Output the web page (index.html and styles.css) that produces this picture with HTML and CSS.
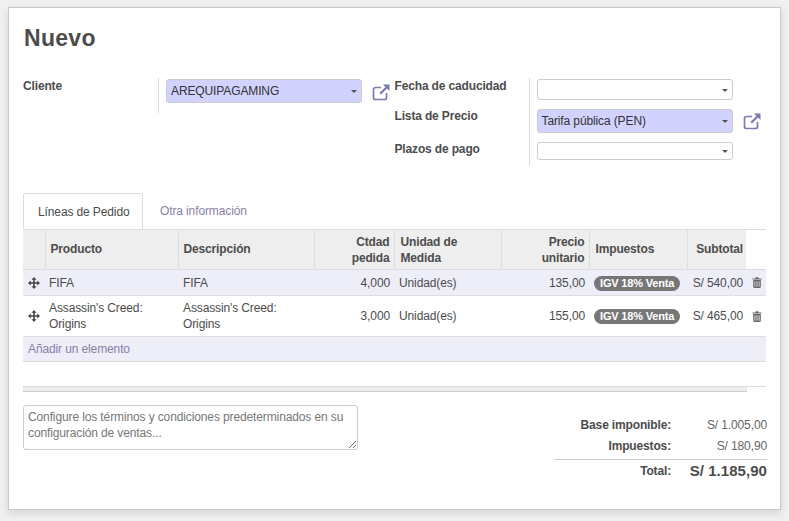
FILE: index.html
```html
<!DOCTYPE html>
<html lang="es">
<head>
    <meta charset="UTF-8">
    <title>Nuevo</title>
    <link rel="stylesheet" href="styles.css">
</head>
<body>
    <svg class="icon-defs" width="0" height="0">
        <symbol id="icon-link" viewBox="0 0 18 18">
            <path d="M14.5 10v4.500a2 2 0 0 1-2 2h-9a2 2 0 0 1-2-2v-8a2 2 0 0 1 2-2H9" fill="none" stroke="currentColor" stroke-width="1.7"/>
            <path d="M11 1.500h6.500V8L15 5.600 9 11.600 7.400 10 13.400 4z" fill="currentColor"/>
        </symbol>
        <symbol id="icon-move" viewBox="0 0 12 12">
            <path d="M5.200 2.800h1.600v2.400h2.400V3.500L12 6 9.200 8.500V6.800H6.800v2.400h1.700L6 12 3.500 9.200h1.700V6.800H2.800v1.700L0 6l2.800-2.500v1.700h2.400V2.800H3.500L6 0l2.500 2.800z" fill="currentColor"/>
        </symbol>
        <symbol id="icon-trash" viewBox="0 0 10 11">
            <path d="M3.300 1.500 3.800.3h2.400l.5 1.200H9.500v1H.5v-1zM1.200 3h7.600v6.800c0 .7-.4 1.200-1 1.200H2.200c-.6 0-1-.5-1-1.200zm1.300 1.200v5.600h.8V4.200zm2.100 0v5.600h.8V4.200zm2.100 0v5.600h.8V4.200z" fill="currentColor" fill-rule="evenodd"/>
        </symbol>
    </svg>

    <div class="sheet">
        <h1 class="title">Nuevo</h1>

        <div class="form-groups">
            <div class="group group-left">
                <div class="label-col">
                    <label class="label">Cliente</label>
                </div>
                <div class="field-col">
                    <div class="field-row">
                        <div class="select select-required select-client">AREQUIPAGAMING<span class="caret"></span></div>
                        <svg class="link-icon"><use href="#icon-link"/></svg>
                    </div>
                </div>
            </div>
            <div class="group group-right">
                <div class="label-col label-col-right">
                    <label class="label label-date">Fecha de caducidad</label>
                    <label class="label label-price">Lista de Precio</label>
                    <label class="label label-terms">Plazos de pago</label>
                </div>
                <div class="field-col">
                    <div class="field-row row-date">
                        <div class="select select-date"><span class="caret"></span></div>
                    </div>
                    <div class="field-row row-price">
                        <div class="select select-required select-price">Tarifa pública (PEN)<span class="caret"></span></div>
                        <svg class="link-icon"><use href="#icon-link"/></svg>
                    </div>
                    <div class="field-row row-terms">
                        <div class="select select-terms"><span class="caret"></span></div>
                    </div>
                </div>
            </div>
        </div>

        <ul class="tabs">
            <li class="tab tab-active">Líneas de Pedido</li>
            <li class="tab">Otra información</li>
        </ul>

        <table class="lines">
            <colgroup>
                <col class="col-handle"><col class="col-product"><col class="col-desc"><col class="col-qty">
                <col class="col-uom"><col class="col-price"><col class="col-tax"><col class="col-subtotal"><col class="col-trash">
            </colgroup>
            <thead>
                <tr>
                    <th></th>
                    <th class="single">Producto</th>
                    <th class="single">Descripción</th>
                    <th class="num">Ctdad pedida</th>
                    <th class="wide">Unidad de Medida</th>
                    <th class="num">Precio unitario</th>
                    <th class="wide single">Impuestos</th>
                    <th class="num amount single">Subtotal</th>
                    <th class="th-empty"></th>
                </tr>
            </thead>
            <tbody>
                <tr class="row-tint row-one">
                    <td class="handle"><svg class="move-icon"><use href="#icon-move"/></svg></td>
                    <td>FIFA</td>
                    <td>FIFA</td>
                    <td class="num">4,000</td>
                    <td>Unidad(es)</td>
                    <td class="num">135,00</td>
                    <td class="tax"><span class="badge">IGV 18% Venta</span></td>
                    <td class="num amount">S/ 540,00</td>
                    <td class="trash"><svg class="trash-icon"><use href="#icon-trash"/></svg></td>
                </tr>
                <tr class="row-two">
                    <td class="handle"><svg class="move-icon"><use href="#icon-move"/></svg></td>
                    <td>Assassin's Creed: Origins</td>
                    <td>Assassin's Creed: Origins</td>
                    <td class="num">3,000</td>
                    <td>Unidad(es)</td>
                    <td class="num">155,00</td>
                    <td class="tax"><span class="badge">IGV 18% Venta</span></td>
                    <td class="num amount">S/ 465,00</td>
                    <td class="trash"><svg class="trash-icon"><use href="#icon-trash"/></svg></td>
                </tr>
                <tr class="row-tint row-add">
                    <td colspan="9"><a class="add-line">Añadir un elemento</a></td>
                </tr>
            </tbody>
        </table>

        <div class="scroll-track"><div class="scroll-bar"></div></div>

        <div class="footer-row">
            <textarea class="notes" placeholder="Configure los términos y condiciones predeterminados en su configuración de ventas..."></textarea>
            <div class="totals">
                <div class="total-row"><span class="total-label">Base imponible:</span><span class="total-value">S/ 1.005,00</span></div>
                <div class="total-row"><span class="total-label">Impuestos:</span><span class="total-value">S/ 180,90</span></div>
                <div class="total-row total-final"><span class="total-label">Total:</span><span class="total-value">S/ 1.185,90</span></div>
            </div>
        </div>

        <div class="bottom-line"></div>
    </div>
</body>
</html>
```

FILE: styles.css
```css
body {
    margin: 0;
    height: 521px;
    overflow: hidden;
    background-color: #f0f0f0;
    color: #4c4c4c;
    font-family: "Liberation Sans", Arial, sans-serif;
    font-size: 12px;
    line-height: 16px;
    letter-spacing: -0.12px;
}
.icon-defs {
    position: absolute;
}
.sheet {
    box-sizing: border-box;
    width: 773px;
    height: 503px;
    margin: 7px 0 0 8px;
    padding: 0 14px;
    background-color: #fff;
    border: 1px solid #c8c8d0;
    box-shadow: 0 3px 8px rgba(0, 0, 0, 0.12);
}
.title {
    margin: 0;
    padding: 14px 0 0 1px;
    font-size: 23px;
    line-height: 32px;
    letter-spacing: 0.3px;
    font-weight: bold;
    color: #4c4c4c;
}

/* form header */
.form-groups {
    display: flex;
    margin-top: 24px;
    height: 88px;
}
.group {
    display: flex;
}
.group-left {
    width: 372px;
}
.group-right {
    width: 372px;
}
.label-col {
    box-sizing: border-box;
    width: 136px;
    border-right: 1px solid #d9d9d9;
    height: 35px;
}
.label-col-right {
    width: 135px;
    height: 88px;
}
.label {
    display: block;
    font-weight: bold;
    letter-spacing: -0.15px;
    color: #4c4c4c;
}
.label-price {
    margin-top: 14px;
}
.label-terms {
    margin-top: 17px;
}
.field-col {
    padding-left: 7px;
    padding-top: 1px;
}
.field-row {
    display: flex;
    align-items: center;
}
.row-date {
    margin-bottom: 9px;
}
.row-price {
    margin-bottom: 9px;
}
.select {
    box-sizing: border-box;
    position: relative;
    width: 196px;
    height: 21px;
    padding: 0 4px;
    line-height: 21px;
    background-color: #fff;
    border: 1px solid #ccc;
    border-radius: 3px;
    color: #333;
}
.select-required {
    height: 24px;
    line-height: 22px;
    background-color: #d2d2ff;
}
.select-terms {
    height: 18px;
}
.caret {
    position: absolute;
    right: 4px;
    top: 50%;
    margin-top: -1px;
    border-top: 3px solid #555;
    border-left: 3px solid transparent;
    border-right: 3px solid transparent;
}
.link-icon {
    width: 18px;
    height: 18px;
    margin-left: 10px;
    color: #7c7bad;
}
.group-left .link-icon {
    margin-top: 1px;
}

/* tabs */
.tabs {
    display: flex;
    list-style: none;
    margin: 27px 0 0;
    padding: 0;
    height: 36px;
}
.tab {
    padding: 10px 14px 10px 17px;
    line-height: 16px;
    color: #8b7fa8;
    white-space: nowrap;
}
.tab-active {
    box-sizing: border-box;
    width: 120px;
    height: 36px;
    padding-left: 14px;
    background-color: #fff;
    border: 1px solid #ddd;
    border-bottom: none;
    border-radius: 3px 3px 0 0;
    color: #4c4c4c;
}

/* order lines */
.lines {
    width: 743px;
    table-layout: fixed;
    border-collapse: collapse;
    color: #4c4c4c;
}
.col-handle { width: 22px; }
.col-product { width: 133px; }
.col-desc { width: 136px; }
.col-qty { width: 80px; }
.col-uom { width: 107px; }
.col-price { width: 88px; }
.col-tax { width: 98px; }
.col-subtotal { width: 59px; }
.col-trash { width: 20px; }
.lines thead tr {
    height: 40px;
}
.lines th {
    padding: 0 4px 0 5px;
    background-color: #eee;
    border-top: 1px solid #ddd;
    border-left: 1px solid #ddd;
    border-bottom: 1px solid #ddd;
    text-align: left;
    font-weight: bold;
    letter-spacing: -0.15px;
}
.lines th.wide {
    padding-left: 6px;
}
.lines th:first-child {
    border-left: none;
}
.lines th.th-empty {
    background-color: #fff;
    border-left: none;
}
.lines th.num,
.lines td.num {
    text-align: right;
}
.lines td {
    padding: 0 4px 0 5px;
    border-bottom: 1px solid #ddd;
}
.lines th.amount,
.lines td.amount {
    padding-left: 0;
    padding-right: 3px;
    white-space: nowrap;
}
.lines th.single {
    padding-bottom: 2px;
}
.row-tint {
    background-color: #eeeef8;
}
.row-one {
    height: 26px;
}
.row-two {
    height: 41px;
}
.row-add {
    height: 25px;
}
.lines td.handle {
    padding: 0 0 0 5px;
    line-height: 0;
}
.lines td.handle + td {
    padding-left: 4px;
}
.lines td.trash {
    padding: 0 0 0 6px;
    line-height: 0;
}
.move-icon {
    width: 12px;
    height: 12px;
    color: #444;
}
.trash-icon {
    width: 10px;
    height: 11px;
    color: #666;
}
.badge {
    display: inline-block;
    padding: 0 6px;
    height: 15px;
    line-height: 15px;
    background-color: #777;
    border-radius: 8px;
    color: #fff;
    font-size: 11px;
    font-weight: bold;
    letter-spacing: -0.17px;
    white-space: nowrap;
}
.add-line {
    color: #8b7fa8;
}

/* scroll bar under the table */
.scroll-track {
    width: 743px;
    margin-top: 24px;
    border-top: 1px solid #ddd;
}
.scroll-bar {
    box-sizing: border-box;
    width: 724px;
    height: 5px;
    background-color: #ececec;
    border-bottom: 1px solid #ccc;
}

/* notes and totals */
.footer-row {
    display: flex;
    justify-content: space-between;
    margin-top: 13px;
}
.notes {
    box-sizing: border-box;
    display: block;
    width: 335px;
    height: 45px;
    margin: 0;
    padding: 3px 4px;
    border: 1px solid #ccc;
    border-radius: 3px;
    font-family: inherit;
    font-size: 12px;
    line-height: 16px;
    letter-spacing: -0.12px;
    color: #333;
}
.notes::placeholder {
    color: #777;
    opacity: 1;
}
.totals {
    width: 213px;
    margin-top: 12px;
    margin-right: -1px;
}
.total-row {
    display: flex;
    height: 21px;
    line-height: 16px;
}
.total-label {
    width: 117px;
    text-align: right;
    font-weight: bold;
    letter-spacing: -0.15px;
}
.total-value {
    flex: 1;
    text-align: right;
    color: #666;
}
.total-final {
    height: 24px;
    padding-top: 1px;
    border-top: 1px solid #ccc;
    line-height: 20px;
}
.total-final .total-value {
    font-size: 15px;
    font-weight: bold;
    letter-spacing: 0.05px;
    color: #4c4c4c;
}
.bottom-line {
    width: 744px;
    margin-top: 25px;
    border-top: 1px solid #ddd;
}
```
